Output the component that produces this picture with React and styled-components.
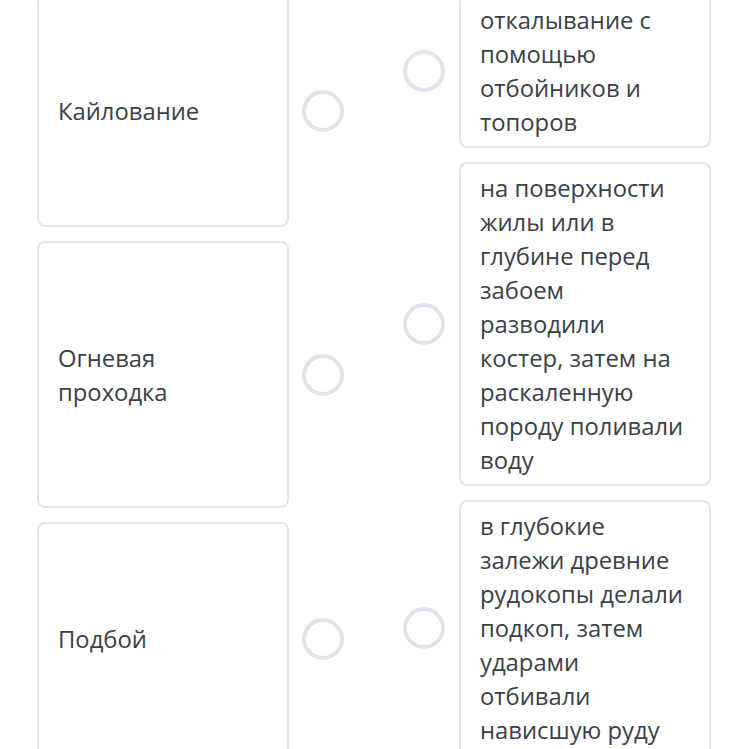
import React from "react";
import styled, { createGlobalStyle } from "styled-components";

const Global = createGlobalStyle`
  html, body { margin: 0; padding: 0; background: #ffffff; }
  body { overflow: hidden; height: 749px; }
  * { box-sizing: border-box; }
`;

const Board = styled.div`
  display: flex;
  align-items: flex-start;
  gap: 59px;
  padding-left: 37px;
  margin-top: -6px;
  font-family: "Open Sans", "Noto Sans", sans-serif;
  color: #3b3f47;
`;

const Column = styled.div`
  display: flex;
  flex-direction: column;
  gap: 14px;
  padding-top: ${(p) => p.$offset || 0}px;
`;

const Item = styled.div`
  display: flex;
  align-items: center;
  gap: ${(p) => p.$gap || 13}px;
`;

const Card = styled.div`
  width: 252px;
  min-height: ${(p) => p.$height || 0}px;
  border: 2px solid #e4e5e9;
  border-radius: 8px;
  background: #fff;
  padding: 7px 19px;
  font-size: 23.8px;
  line-height: 34px;
  display: flex;
  align-items: center;
`;

const Circle = styled.div`
  width: 42px;
  height: 42px;
  flex: none;
  border-radius: 50%;
  border: 4px solid #e2e4e9;
`;

const left = [
  { text: "Кайлование", h: 232 },
  { text: "Огневая проходка", h: 267 },
  { text: "Подбой", h: 234 },
];

const right = [
  "откалывание с помощью отбойников и топоров",
  "на поверхности жилы или в глубине перед забоем разводили костер, затем на раскаленную породу поливали воду",
  "в глубокие залежи древние рудокопы делали подкоп, затем ударами отбивали нависшую руду",
];

export default function App() {
  return (
    <>
      <Global />
      <Board>
        <Column $offset={1}>
          {left.map((l) => (
            <Item key={l.text}>
              <Card $height={l.h}>{l.text}</Card>
              <Circle />
            </Item>
          ))}
        </Column>
        <Column>
          {right.map((t) => (
            <Item key={t} $gap={14}>
              <Circle />
              <Card>{t}</Card>
            </Item>
          ))}
        </Column>
      </Board>
    </>
  );
}
